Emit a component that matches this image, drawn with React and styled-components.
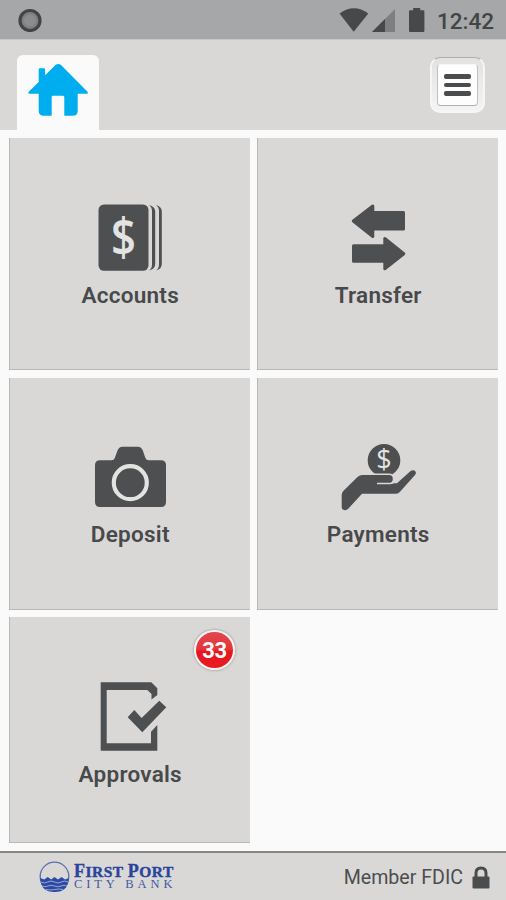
import React from 'react';
import styled, { createGlobalStyle } from 'styled-components';

const GlobalStyle = createGlobalStyle`
  * {
    box-sizing: border-box;
  }

  body {
    margin: 0;
    background: #fafafa;
    font-family: Roboto, "Liberation Sans", sans-serif;
    color: #47494b;
  }

  svg {
    display: block;
    flex-shrink: 0;
  }
`;

const Screen = styled.div`
  display: flex;
  flex-direction: column;
  width: 506px;
  height: 900px;
  overflow: hidden;
  background: #fafafa;
`;

const StatusBar = styled.div`
  display: flex;
  align-items: center;
  justify-content: space-between;
  height: 39px;
  padding: 0 12px 0 18px;
  background: #a5a7a9;
`;

const StatusIcons = styled.div`
  display: flex;
  align-items: center;
`;

const Clock = styled.span`
  margin-left: 12px;
  padding-top: 3px;
  font-size: 22.5px;
  font-weight: 500;
  line-height: 26px;
  letter-spacing: 0;
  color: #434444;
`;

const Header = styled.header`
  display: flex;
  align-items: flex-end;
  justify-content: space-between;
  height: 91px;
  padding: 0 21px 0 17px;
  background: #d9d8d6;
  border-top: 1px solid #c9c9c8;
`;

const HomeTab = styled.button`
  display: flex;
  justify-content: center;
  width: 82px;
  height: 75px;
  padding: 8px 0 0;
  border: none;
  border-radius: 6px 6px 0 0;
  background: #fafafa;
`;

const MenuButton = styled.button`
  display: flex;
  align-items: center;
  justify-content: center;
  width: 55px;
  height: 56px;
  margin-bottom: 17px;
  padding: 0;
  border: 2px solid #f6f6f6;
  border-top: 1px solid #b0b0af;
  border-radius: 10px;
  background: linear-gradient(#e2e2e1, #f4f4f4);
`;

const MenuLines = styled.span`
  display: flex;
  flex-direction: column;
  align-items: center;
  justify-content: center;
  gap: 4.4px;
  width: 41px;
  height: 42px;
  margin-top: 1px;
  border: 1px solid #c0c0c0;
  border-top-color: #f6f6f6;
  border-bottom-color: #b0b0b0;
  border-radius: 4px;
  background: #fdfdfd;

  i {
    width: 27px;
    height: 4.2px;
    border-radius: 2px;
    background: #4a4b4d;
  }
`;

const Grid = styled.main`
  display: grid;
  grid-template-columns: 241px 241px;
  grid-template-rows: 232px 232px 226px;
  column-gap: 7px;
  row-gap: 7.5px;
  height: 721px;
  padding: 8.3px 8px 0 9px;
`;

const TileBox = styled.div`
  position: relative;
  display: flex;
  flex-direction: column;
  align-items: center;
  padding-top: 64px;
  background: #d9d8d6;
  box-shadow: inset 1px 0 0 #b7b7b6, inset 0 -1px 0 #b9b9b8;
`;

const TileLabel = styled.span`
  margin-top: 6.5px;
  padding-left: 1.5px;
  font-size: 22.5px;
  font-weight: 600;
  line-height: 28px;
  letter-spacing: 0.25px;
  color: #47494b;
`;

const Badge = styled.span`
  position: absolute;
  top: 13px;
  right: 15px;
  width: 41px;
  height: 40px;
  border: 2.5px solid #faf3f2;
  border-radius: 50%;
  background: linear-gradient(#e0474d 0%, #e5353b 48%, #e8151d 54%, #e81c24 100%);
  box-shadow: 0 0 2px 1px rgba(120, 120, 120, 0.4);
  color: #fff;
  font-size: 22px;
  font-weight: 700;
  line-height: 37px;
  letter-spacing: -0.4px;
  text-align: center;
`;

const Footer = styled.footer`
  display: flex;
  align-items: center;
  justify-content: space-between;
  height: 49px;
  padding: 0 16px 0 39px;
  border-top: 2px solid #858686;
  background: #d9d8d6;
`;

const Brand = styled.div`
  display: flex;
  align-items: center;
  gap: 4px;
`;

const BrandText = styled.div`
  display: flex;
  flex-direction: column;
  font-family: "Liberation Serif", serif;
  color: #2a449b;
  white-space: nowrap;
`;

const BrandName = styled.span`
  height: 14px;
  font-size: 15.5px;
  font-weight: 700;
  line-height: 15px;
  letter-spacing: 0.5px;
  -webkit-text-stroke: 0.4px #2a449b;

  b {
    font-size: 18px;
    line-height: 15px;
  }
`;

const BrandSub = styled.span`
  height: 12px;
  font-size: 12.5px;
  line-height: 12px;
  letter-spacing: 3.9px;
  color: #3f58a4;
`;

const Member = styled.div`
  display: flex;
  align-items: center;
  gap: 9px;
  padding-top: 1px;
  font-size: 19.6px;
  color: #4c4d4f;
`;

const TileSvg = ({ children }) => (
  <svg width="81" height="72" viewBox="0 0 81 72" fill="#4d4f51">
    {children}
  </svg>
);

const AccountsIcon = () => (
  <TileSvg>
    <rect x="9.5" y="2.5" width="50" height="66.3" rx="5.5" />
    <path d="M60 3q3 2 3 6v53.500q0 4-3 6q6.200-1.500 6.200-6.500v-52.500q0-5-6.200-6.500z" />
    <path d="M67 3q3 2 3 6v53.500q0 4-3 6q5.800-1.500 5.800-6.500v-52.500q0-5-5.800-6.500z" />
    <text
      transform="translate(34.500 53.600) scale(0.93 1.1)"
      fontFamily="'Open Sans', sans-serif"
      fontSize="47"
      fontWeight="600"
      textAnchor="middle"
      fill="#e3e3e2"
    >
      $
    </text>
  </TileSvg>
);

const TransferIcon = () => (
  <TileSvg>
    <g stroke="#4d4f51" strokeWidth="3" strokeLinejoin="round">
      <path d="M16.300 19 35.800 4v6.600h30.700v16.400H35.800v7.500z" />
      <path d="M66.800 51.700 47.800 36.500v7.200H16.500v15.500h31.300v7.500z" />
    </g>
  </TileSvg>
);

const DepositIcon = () => (
  <TileSvg>
    <path d="M11 18.300h11.500q2.500 0 3.300-2.300l2.700-7.500q1.400-3.800 5-3.800h15.300q3.700 0 5 3.800l2.600 7.500q.8 2.300 3.300 2.300H72q5 0 5 5V60q0 5-5 5H11q-5 0-5-5V23.300q0-5 5-5z" />
    <circle cx="41.300" cy="40.700" r="16.500" fill="none" stroke="#e3e3e2" strokeWidth="4.200" />
  </TileSvg>
);

const PaymentsIcon = () => (
  <TileSvg>
    <circle cx="47" cy="18.300" r="16.300" />
    <text
      transform="translate(47 27)"
      fontFamily="'Open Sans', sans-serif"
      fontSize="27"
      fontWeight="500"
      textAnchor="middle"
      fill="#e3e3e2"
    >
      $
    </text>
    <path
      d="M4.700 53q0-2.500 1.800-4.200L20.500 35q2-2 5-2H52q3.800 0 3.800 4 0 3.500-3.500 4.200H60L73.300 29.300q3-2.300 5 0 1.300 1.700-.3 3.700L63 49.800q-1.500 1.900-4 1.900H25L11 67q-1.500 1.500-4 1-2.300-.3-2.300-2.500z"
      stroke="#d9d8d6"
      strokeWidth="3"
      paintOrder="stroke"
    />
    <path d="M40 41.400h13.500q3 0 4-2" fill="none" stroke="#d9d8d6" strokeWidth="1.500" />
  </TileSvg>
);

const ApprovalsIcon = () => (
  <TileSvg>
    <path d="M11.700 1.300h50.600l6 6V14l-5.800 4.600V13l-4.200-4H17.700v53.300H62V50.700l6.300-6.700v25.700H11.700z" />
    <path d="M38.700 36.300l6.600-7.200 7.300 8 17.700-17.400 7 6.600-24 25z" />
  </TileSvg>
);

const HomeIcon = () => (
  <svg width="60" height="54" viewBox="28 63 60 54" fill="#00aeef">
    <path d="M55.500 65q2.800-2 5.500 0l26.500 26.700q1 2-1 2H77.700v17q0 5-5 5h-8.400V97q0-1.300-1.300-1.300H53q-1.300 0-1.300 1.300v18.700h-8q-5 0-5-5v-17h-9q-2 0-1-2l10-9.700V69.500q0-1.200 1.200-1.200h4q1.200 0 1.200 1.200v5.800z" />
  </svg>
);

const RecordIcon = () => (
  <svg width="24" height="24" viewBox="0 0 24 24">
    <circle cx="12" cy="12.500" r="10" fill="#7f8080" stroke="#434445" strokeWidth="3.200" />
    <circle cx="12" cy="12.500" r="6" fill="#8b8c8c" />
  </svg>
);

const SignalIcons = () => (
  <svg width="86" height="26" viewBox="338 7 86 26" fill="#474848">
    <path d="M338.500 13.500q14.500-10.500 28.800 0L352.700 31.800z" />
    <path d="M371 32 394 9v23z" fill="#7d7f80" />
    <path d="M371 32 384 19v13z" />
    <path d="M408 11.500q0-1.200 1.200-1.200h3V8h7v2.300h3q1.200 0 1.200 1.200v19.300q0 1.200-1.200 1.200h-13q-1.200 0-1.200-1.200z" />
  </svg>
);

const BankLogo = () => (
  <svg width="31" height="32" viewBox="0 0 31 32">
    <circle cx="15.500" cy="15.500" r="14.300" fill="none" stroke="#5870b2" strokeWidth="1.300" />
    <path d="M1.200 17l4 1.500 3.500-2.500 3.500 2.500 3.300-2.500 3.500 2.500 3.500-2.500 3.500 2.500 3.700-1.500Q29.500 31 15.500 31 1.500 31 1.200 17z" fill="#2a4aa3" />
    <g fill="none" stroke="#b9c1da" strokeWidth="0.800">
      <path d="M2 21q3.500 2 6.700 0t6.800 0 6.800 0 6.700 0" />
      <path d="M3 25q3 1.500 6 0t6.500 0 6.500 0 6 0" />
      <path d="M7 28.500q4 1 8.500 0t8.500 0" />
    </g>
  </svg>
);

const LockIcon = () => (
  <svg width="18" height="23" viewBox="0 0 18 23">
    <path d="M4 12V7q0-5 5-5t5 5v5" fill="none" stroke="#4a4c4e" strokeWidth="3" />
    <rect x="0.500" y="10.500" width="17" height="12" rx="1" fill="#4a4c4e" />
  </svg>
);

const tiles = [
  { label: 'Accounts', Icon: AccountsIcon },
  { label: 'Transfer', Icon: TransferIcon },
  { label: 'Deposit', Icon: DepositIcon },
  { label: 'Payments', Icon: PaymentsIcon },
  { label: 'Approvals', Icon: ApprovalsIcon, count: 33 },
];

const App = () => {
  return (
    <>
      <GlobalStyle />
      <Screen>
        <StatusBar>
          <RecordIcon />
          <StatusIcons>
            <SignalIcons />
            <Clock>12:42</Clock>
          </StatusIcons>
        </StatusBar>

        <Header>
          <HomeTab>
            <HomeIcon />
          </HomeTab>
          <MenuButton>
            <MenuLines>
              <i />
              <i />
              <i />
            </MenuLines>
          </MenuButton>
        </Header>

        <Grid>
          {tiles.map(({ label, Icon, count }) => (
            <TileBox key={label}>
              <Icon />
              <TileLabel>{label}</TileLabel>
              {count && <Badge>{count}</Badge>}
            </TileBox>
          ))}
        </Grid>

        <Footer>
          <Brand>
            <BankLogo />
            <BrandText>
              <BrandName>
                <b>F</b>IRST <b>P</b>ORT
              </BrandName>
              <BrandSub>CITY BANK</BrandSub>
            </BrandText>
          </Brand>
          <Member>
            Member FDIC
            <LockIcon />
          </Member>
        </Footer>
      </Screen>
    </>
  );
};

export default App;
